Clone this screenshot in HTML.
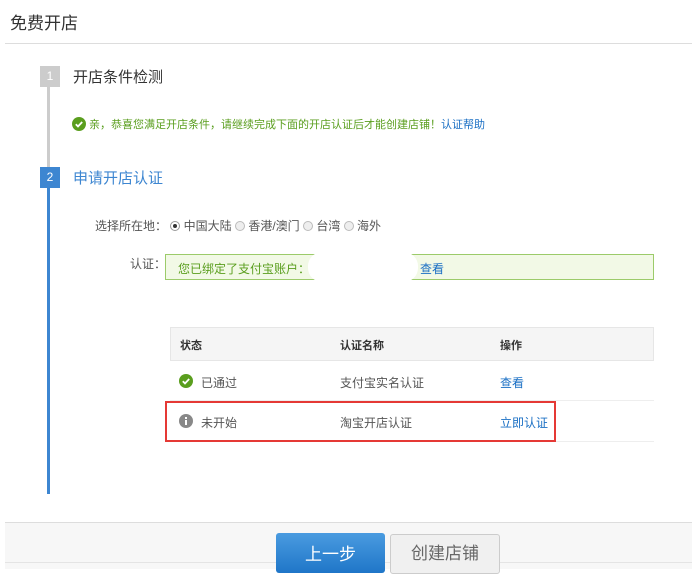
<!DOCTYPE html>
<html><head><meta charset="utf-8"><style>
*{margin:0;padding:0;box-sizing:border-box}
body{width:692px;height:569px;background:#fff;position:relative;overflow:hidden;font-family:"Liberation Sans","Noto Sans CJK SC",sans-serif;color:#333}
.a{position:absolute;white-space:nowrap}
</style></head><body>
<div class="a" style="left:10px;top:9px;font-size:17px;color:#333">免费开店</div>
<div class="a" style="left:5px;top:43px;width:687px;height:1px;background:#ddd"></div>

<div class="a" style="left:47px;top:86px;width:3px;height:82px;background:#ccc"></div>
<div class="a" style="left:40px;top:66px;width:20px;height:21px;background:#ccc;color:#fff;font-size:12px;text-align:center;line-height:21px">1</div>
<div class="a" style="left:73px;top:66px;font-size:15px;color:#333">开店条件检测</div>

<svg class="a" style="left:72px;top:117px" width="14" height="14" viewBox="0 0 14 14"><circle cx="7" cy="7" r="7" fill="#5a9e1e"/><path d="M3.8 7.2l2.2 2.2 4.2-4.4" stroke="#fff" stroke-width="1.8" fill="none"/></svg>
<div class="a" style="left:89px;top:116px;font-size:11px;color:#5a9e1e">亲，恭喜您满足开店条件，请继续完成下面的开店认证后才能创建店铺！<span style="color:#1a6fc4">认证帮助</span></div>

<div class="a" style="left:47px;top:187px;width:3px;height:307px;background:#3d86d1"></div>
<div class="a" style="left:40px;top:167px;width:20px;height:21px;background:#3d86d1;color:#fff;font-size:12px;text-align:center;line-height:21px">2</div>
<div class="a" style="left:73px;top:167px;font-size:15px;color:#3d86d1">申请开店认证</div>

<div class="a" style="left:95px;top:217px;font-size:12px;color:#555">选择所在地：
<span style="display:inline-block;width:10px;height:10px;border:1px solid #999;border-radius:50%;vertical-align:-1px;position:relative"><span style="position:absolute;left:2px;top:2px;width:4px;height:4px;border-radius:50%;background:#333"></span></span> 中国大陆
<span style="display:inline-block;width:10px;height:10px;border:1px solid #bbb;border-radius:50%;vertical-align:-1px;background:#eee"></span> 香港/澳门
<span style="display:inline-block;width:10px;height:10px;border:1px solid #bbb;border-radius:50%;vertical-align:-1px;background:#eee"></span> 台湾
<span style="display:inline-block;width:10px;height:10px;border:1px solid #bbb;border-radius:50%;vertical-align:-1px;background:#eee"></span> 海外</div>

<div class="a" style="left:130px;top:255px;font-size:12px;color:#555">认证：</div>
<div class="a" style="left:165px;top:254px;width:489px;height:26px;background:#f2f9e6;border:1px solid #9ccb6a"></div>
<div class="a" style="left:178px;top:260px;font-size:12px;color:#5a9e1e">您已绑定了支付宝账户：</div>
<div class="a" style="left:308px;top:252px;width:110px;height:30px;background:#fff;border-radius:14px"></div>
<div class="a" style="left:420px;top:260px;font-size:12px;color:#1a6fc4">查看</div>

<div class="a" style="left:170px;top:327px;width:484px;height:34px;background:#f5f5f5;border:1px solid #e6e6e6"></div>
<div class="a" style="left:180px;top:337px;font-size:11px;font-weight:bold;color:#333">状态</div>
<div class="a" style="left:340px;top:337px;font-size:11px;font-weight:bold;color:#333">认证名称</div>
<div class="a" style="left:500px;top:337px;font-size:11px;font-weight:bold;color:#333">操作</div>
<div class="a" style="left:170px;top:400px;width:484px;height:1px;background:#eee"></div>
<div class="a" style="left:170px;top:441px;width:484px;height:1px;background:#eee"></div>

<svg class="a" style="left:179px;top:374px" width="14" height="14" viewBox="0 0 14 14"><circle cx="7" cy="7" r="7" fill="#5a9e1e"/><path d="M3.8 7.2l2.2 2.2 4.2-4.4" stroke="#fff" stroke-width="1.8" fill="none"/></svg>
<div class="a" style="left:201px;top:374px;font-size:12px;color:#555">已通过</div>
<div class="a" style="left:340px;top:374px;font-size:12px;color:#555">支付宝实名认证</div>
<div class="a" style="left:500px;top:374px;font-size:12px;color:#1a6fc4">查看</div>

<svg class="a" style="left:179px;top:414px" width="14" height="14" viewBox="0 0 14 14"><circle cx="7" cy="7" r="7" fill="#888"/><rect x="6" y="3" width="2" height="2" fill="#fff"/><rect x="6" y="6" width="2" height="5" fill="#fff"/></svg>
<div class="a" style="left:201px;top:414px;font-size:12px;color:#555">未开始</div>
<div class="a" style="left:340px;top:414px;font-size:12px;color:#555">淘宝开店认证</div>
<div class="a" style="left:500px;top:414px;font-size:12px;color:#1a6fc4">立即认证</div>
<div class="a" style="left:165px;top:401px;width:391px;height:41px;border:2px solid #e53935"></div>

<div class="a" style="left:5px;top:522px;width:687px;height:47px;background:#f7f7f7;border-top:1px solid #ddd"></div>
<div class="a" style="left:5px;top:562px;width:687px;height:1px;background:#e4e4e4"></div>
<div class="a" style="left:276px;top:533px;width:109px;height:40px;background:linear-gradient(#4a9be0,#1f76c8);border-radius:3px;color:#fff;font-size:17px;text-align:center;line-height:40px;padding-top:2px">上一步</div>
<div class="a" style="left:390px;top:534px;width:110px;height:40px;background:#f0f0f0;border:1px solid #ccc;border-radius:3px;color:#666;font-size:17px;text-align:center;line-height:38px">创建店铺</div>
</body></html>
